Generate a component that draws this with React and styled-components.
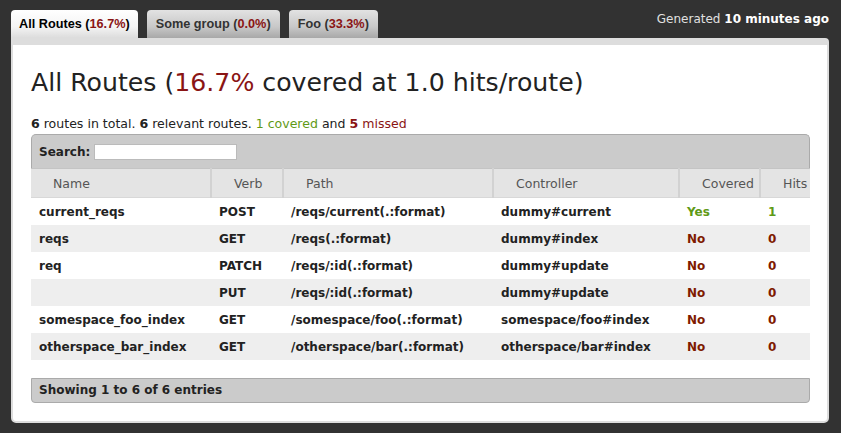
import React from "react";
import styled, { createGlobalStyle } from "styled-components";

const GlobalStyle = createGlobalStyle`
  body {
    margin: 0;
    background: #323232;
    font-family: "DejaVu Sans", "Liberation Sans", sans-serif;
  }
`;

const routes = [
  { name: "current_reqs", verb: "POST", path: "/reqs/current(.:format)", controller: "dummy#current", covered: true, hits: 1 },
  { name: "reqs", verb: "GET", path: "/reqs(.:format)", controller: "dummy#index", covered: false, hits: 0 },
  { name: "req", verb: "PATCH", path: "/reqs/:id(.:format)", controller: "dummy#update", covered: false, hits: 0 },
  { name: "", verb: "PUT", path: "/reqs/:id(.:format)", controller: "dummy#update", covered: false, hits: 0 },
  { name: "somespace_foo_index", verb: "GET", path: "/somespace/foo(.:format)", controller: "somespace/foo#index", covered: false, hits: 0 },
  { name: "otherspace_bar_index", verb: "GET", path: "/otherspace/bar(.:format)", controller: "otherspace/bar#index", covered: false, hits: 0 },
];

const columns = [
  { label: "Name", width: 180 },
  { label: "Verb", width: 72 },
  { label: "Path", width: 210 },
  { label: "Controller", width: 186 },
  { label: "Covered", width: 81 },
  { label: "Hits", width: 50 },
];

const Page = styled.div`
  padding: 10px 12px 12px 11px;
`;

const TopBar = styled.div`
  display: flex;
  justify-content: space-between;
  align-items: flex-start;
`;

const Tabs = styled.ul`
  display: flex;
  gap: 9px;
  margin: 0;
  padding: 0;
  list-style: none;
`;

const Tab = styled.li`
  height: 28px;
  line-height: 29px;
  padding: 0 ${(p) => (p.active ? 8 : 9)}px;
  border-radius: 4px 4px 0 0;
  font-family: "Liberation Sans", Arial, sans-serif;
  font-weight: bold;
  font-size: 12.7px;
  color: ${(p) => (p.active ? "#000" : "#333")};
  background: ${(p) =>
    p.active
      ? "linear-gradient(#fff, #f4f4f4 60%, #dcdcdc)"
      : "linear-gradient(#e2e2e2, #c8c8c8 60%, #a8a8a8)"};
`;

const Red = styled.span`
  color: #8a1414;
`;

const Green = styled.span`
  color: #5f9a17;
`;

const Generated = styled.div`
  padding-top: 2px;
  font-size: 12px;
  color: #e0e0e0;
  b {
    color: #fff;
  }
`;

const Panel = styled.div`
  background: #fff;
  border: 2px solid #ddd;
  border-top-width: 7px;
  border-radius: 0 4px 5px 5px;
  padding: 23px 17px 18px 18px;
`;

const Heading = styled.h1`
  margin: 0 0 19px;
  font-size: 25.2px;
  font-weight: normal;
  color: #222;
  line-height: 30px;
`;

const Summary = styled.p`
  margin: 0 0 3px;
  font-size: 12.55px;
  color: #222;
  line-height: 14px;
`;

const TableWrap = styled.div`
  font-size: 12px;
`;

const SearchBar = styled.div`
  display: flex;
  align-items: center;
  gap: 4px;
  height: 33px;
  padding: 0 7px;
  background: #cbcbcb;
  border: 1px solid #aaa;
  border-bottom: none;
  border-radius: 5px 5px 0 0;
  font-weight: bold;
  color: #222;
`;

const SearchInput = styled.input`
  width: 139px;
  height: 14px;
  border: 1px solid #bbb;
  padding: 0 1px;
  margin: 0;
  background: #fff;
`;

const Table = styled.table`
  width: 100%;
  border-collapse: collapse;
  table-layout: fixed;
`;

const HeadCell = styled.th`
  height: 28px;
  padding: 0 0 0 22px;
  text-align: left;
  font-weight: normal;
  font-size: 12.5px;
  color: #555;
  background: #e4e4e4;
  border-left: 2px solid #d2d2d2;
  border-top: 1px solid #c4c4c4;
  border-bottom: 1px solid #d8d8d8;
  &:first-child {
    border-left: none;
  }
`;

const Row = styled.tr`
  background: ${(p) => (p.odd ? "#eee" : "#fff")};
`;

const Cell = styled.td`
  height: 27px;
  padding: 0 0 0 8px;
  font-weight: bold;
  color: ${(p) => p.color || "#222"};
  white-space: nowrap;
`;

const Footer = styled.div`
  margin-top: 18px;
  height: 23px;
  line-height: 23px;
  padding: 0 7px;
  background: #cbcbcb;
  border: 1px solid #aaa;
  border-radius: 0 0 4px 4px;
  font-weight: bold;
  color: #222;
`;

export default function App() {
  return (
    <Page>
      <GlobalStyle />
      <TopBar>
        <Tabs>
          <Tab active>
            All Routes (<Red>16.7%</Red>)
          </Tab>
          <Tab>
            Some group (<Red>0.0%</Red>)
          </Tab>
          <Tab>
            Foo (<Red>33.3%</Red>)
          </Tab>
        </Tabs>
        <Generated>
          Generated <b>10 minutes ago</b>
        </Generated>
      </TopBar>
      <Panel>
        <Heading>
          All Routes (<Red>16.7%</Red> covered at 1.0 hits/route)
        </Heading>
        <Summary>
          <b>6</b> routes in total. <b>6</b> relevant routes. <Green>1 covered</Green> and{" "}
          <Red>
            <b>5</b> missed
          </Red>
        </Summary>
        <TableWrap>
          <SearchBar>
            <span>Search:</span>
            <SearchInput type="text" />
          </SearchBar>
          <Table>
            <colgroup>
              {columns.map((c) => (
                <col key={c.label} style={{ width: c.width }} />
              ))}
            </colgroup>
            <thead>
              <tr>
                {columns.map((c) => (
                  <HeadCell key={c.label}>{c.label}</HeadCell>
                ))}
              </tr>
            </thead>
            <tbody>
              {routes.map((r, i) => {
                const tone = r.covered ? "#5f9a17" : "#7f1a00";
                return (
                  <Row key={i} odd={i % 2 === 1}>
                    <Cell>{r.name}</Cell>
                    <Cell>{r.verb}</Cell>
                    <Cell>{r.path}</Cell>
                    <Cell>{r.controller}</Cell>
                    <Cell color={tone}>{r.covered ? "Yes" : "No"}</Cell>
                    <Cell color={tone}>{r.hits}</Cell>
                  </Row>
                );
              })}
            </tbody>
          </Table>
          <Footer>Showing 1 to 6 of 6 entries</Footer>
        </TableWrap>
      </Panel>
    </Page>
  );
}
